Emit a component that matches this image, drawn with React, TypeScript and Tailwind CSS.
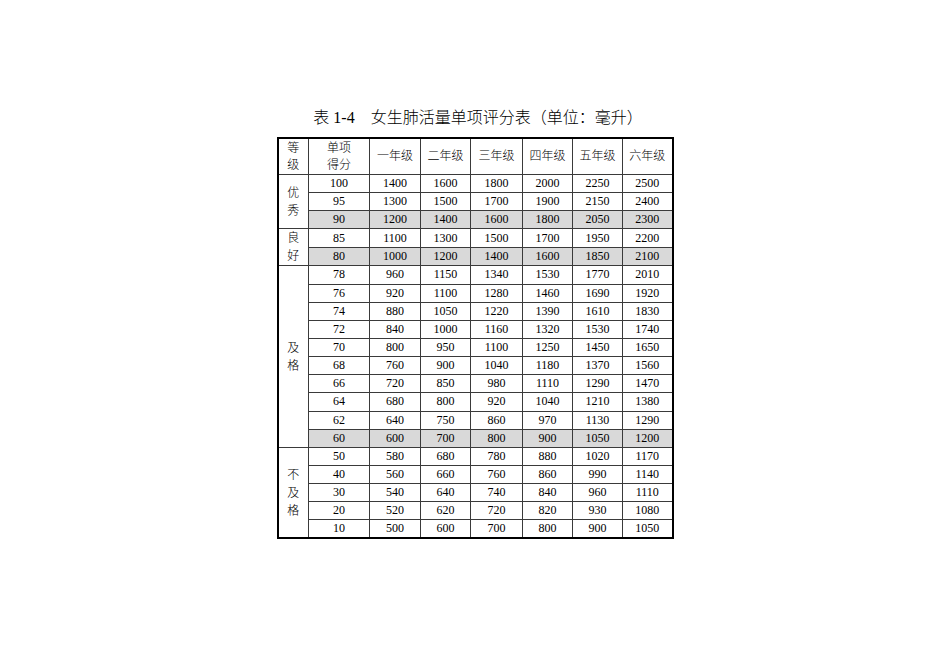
const grades = ["一年级", "二年级", "三年级", "四年级", "五年级", "六年级"];

type Row = { score: number; values: number[]; shaded?: boolean };

const groups: { label: string[]; rows: Row[] }[] = [
  {
    label: ["优", "秀"],
    rows: [
      { score: 100, values: [1400, 1600, 1800, 2000, 2250, 2500] },
      { score: 95, values: [1300, 1500, 1700, 1900, 2150, 2400] },
      { score: 90, values: [1200, 1400, 1600, 1800, 2050, 2300], shaded: true },
    ],
  },
  {
    label: ["良", "好"],
    rows: [
      { score: 85, values: [1100, 1300, 1500, 1700, 1950, 2200] },
      { score: 80, values: [1000, 1200, 1400, 1600, 1850, 2100], shaded: true },
    ],
  },
  {
    label: ["及", "格"],
    rows: [
      { score: 78, values: [960, 1150, 1340, 1530, 1770, 2010] },
      { score: 76, values: [920, 1100, 1280, 1460, 1690, 1920] },
      { score: 74, values: [880, 1050, 1220, 1390, 1610, 1830] },
      { score: 72, values: [840, 1000, 1160, 1320, 1530, 1740] },
      { score: 70, values: [800, 950, 1100, 1250, 1450, 1650] },
      { score: 68, values: [760, 900, 1040, 1180, 1370, 1560] },
      { score: 66, values: [720, 850, 980, 1110, 1290, 1470] },
      { score: 64, values: [680, 800, 920, 1040, 1210, 1380] },
      { score: 62, values: [640, 750, 860, 970, 1130, 1290] },
      { score: 60, values: [600, 700, 800, 900, 1050, 1200], shaded: true },
    ],
  },
  {
    label: ["不", "及", "格"],
    rows: [
      { score: 50, values: [580, 680, 780, 880, 1020, 1170] },
      { score: 40, values: [560, 660, 760, 860, 990, 1140] },
      { score: 30, values: [540, 640, 740, 840, 960, 1110] },
      { score: 20, values: [520, 620, 720, 820, 930, 1080] },
      { score: 10, values: [500, 600, 700, 800, 900, 1050] },
    ],
  },
];

const cell = "border border-[#3a3a3a] p-0 text-center align-middle";

export default function App() {
  return (
    <div
      className="w-[950px] h-[672px] bg-white flex flex-col items-center pt-[107px] text-black"
      style={{ fontFamily: '"Liberation Serif", "Noto Sans CJK SC", serif' }}
    >
      {/* title */}
      <div className="text-[16px] leading-[22px] font-light pl-[6px]">
        表 1-4<span className="inline-block w-[16px]" />女生肺活量单项评分表（单位：毫升）
      </div>

      <table className="mt-[8px] border-collapse table-fixed border-2 border-black text-[12px] leading-[17px]">
        <colgroup>
          <col className="w-[31px]" />
          <col className="w-[61px]" />
          <col className="w-[51px]" />
          <col className="w-[50px]" />
          <col className="w-[52px]" />
          <col className="w-[50px]" />
          <col className="w-[50px]" />
          <col className="w-[50px]" />
        </colgroup>
        <thead>
          <tr className="h-[36.5px]">
            <th className={`${cell} font-light`}>
              等<br />级
            </th>
            <th className={`${cell} font-light`}>
              单项<br />得分
            </th>
            {grades.map((g) => (
              <th key={g} className={`${cell} font-light`}>
                {g}
              </th>
            ))}
          </tr>
        </thead>
        <tbody>
          {groups.map((group) =>
            group.rows.map((row, i) => (
              <tr key={row.score} className="h-[18.15px]">
                {i === 0 && (
                  <td rowSpan={group.rows.length} className={`${cell} leading-[18px] font-light`}>
                    {group.label.map((ch) => (
                      <div key={ch}>{ch}</div>
                    ))}
                  </td>
                )}
                <td className={`${cell} ${row.shaded ? "bg-[#d9d9d9]" : ""}`}>{row.score}</td>
                {row.values.map((v, k) => (
                  <td key={k} className={`${cell} ${row.shaded ? "bg-[#d9d9d9]" : ""}`}>
                    {v}
                  </td>
                ))}
              </tr>
            ))
          )}
        </tbody>
      </table>
    </div>
  );
}
